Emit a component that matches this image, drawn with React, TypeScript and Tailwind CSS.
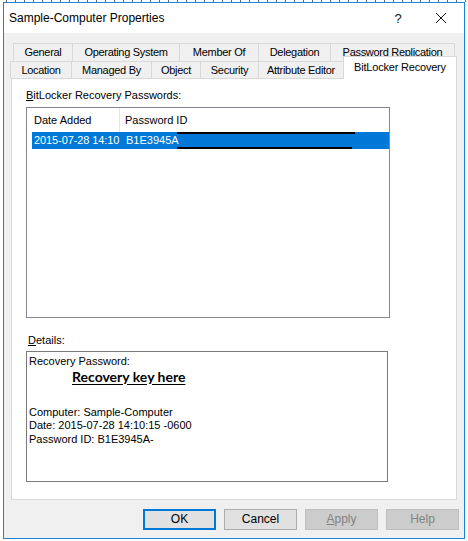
const font = "font-['Liberation_Sans',Arial,sans-serif]";

const topTabs = [
  { label: "General", w: "w-[60px]" },
  { label: "Operating System", w: "w-[108px]" },
  { label: "Member Of", w: "w-[80px]" },
  { label: "Delegation", w: "w-[73px]" },
  { label: "Password Replication", w: "w-[125px]" },
];

const bottomTabs = [
  { label: "Location", w: "w-[62px]" },
  { label: "Managed By", w: "w-[81px]" },
  { label: "Object", w: "w-[50px]" },
  { label: "Security", w: "w-[59px]" },
  { label: "Attribute Editor", w: "w-[86px]" },
];

function Tab({ label, w }: { label: string; w: string }) {
  return (
    <div
      className={`${w} -ml-px flex h-full items-center justify-center border-x border-t border-[#d9d9d9] bg-[#f0f0f0] tracking-[-0.3px] whitespace-nowrap first:ml-0`}
    >
      {label}
    </div>
  );
}

function Button({
  children,
  variant = "normal",
}: {
  children: React.ReactNode;
  variant?: "default" | "normal" | "disabled";
}) {
  const styles = {
    default: "border-2 border-[#0078d7] bg-[#e1e1e1] text-black",
    normal: "border border-[#adadad] bg-[#e1e1e1] text-black",
    disabled: "border border-[#bfbfbf] bg-[#cccccc] text-[#838383]",
  }[variant];
  return (
    <button
      type="button"
      className={`flex h-[21px] w-[73px] items-center justify-center ${styles}`}
    >
      {children}
    </button>
  );
}

export default function App() {
  return (
    <div className={`h-[541px] w-[468px] bg-white text-[11px] leading-[13px] text-black ${font}`}>
      <div className="h-[2px] bg-[repeating-linear-gradient(90deg,transparent_0_6px,#6b6b6b_6px_7px,transparent_7px_9px)]" />

      <div className="ml-[3px] flex h-[537px] w-[462px] flex-col border border-[#1883d7] bg-[#f0f0f0]">
        {/* title bar */}
        <div className="flex h-[30px] shrink-0 items-center bg-white">
          <span className="pl-[5px] text-[12px]">Sample-Computer Properties</span>
          <span className="ml-auto w-[14px] text-center text-[13px] text-[#111]">?</span>
          <svg
            className="mr-[17px] ml-[30px]"
            width="12"
            height="12"
            viewBox="0 0 12 12"
            fill="none"
            stroke="#111"
            strokeWidth="1"
          >
            <path d="M1 1L11 11M11 1L1 11" />
          </svg>
        </div>

        {/* tabs */}
        <div className="mt-[10px] ml-[9px] flex h-[18px]">
          {topTabs.map((t) => (
            <Tab key={t.label} {...t} />
          ))}
        </div>
        <div className="ml-[6px] flex h-[17px]">
          {bottomTabs.map((t) => (
            <Tab key={t.label} {...t} />
          ))}
          <div className="relative z-10 -mt-[5px] -mb-px -ml-px flex h-[23px] w-[114px] items-start justify-center border-x border-t border-[#d9d9d9] bg-white pt-[4px] tracking-[-0.2px]">
            BitLocker Recovery
          </div>
        </div>

        {/* panel */}
        <div className="ml-[7px] flex h-[422px] w-[446px] flex-col border border-[#d9d9d9] bg-white pl-[14px]">
          <div className="mt-[10px]">
            <span className="underline">B</span>itLocker Recovery Passwords:
          </div>

          <div className="mt-[5px] flex h-[211px] w-[364px] flex-col border border-[#828790] bg-white">
            <div className="flex h-[24px] items-center">
              <div className="flex h-full w-[93px] items-center border-r border-[#e5e5e5] pl-[7px]">
                Date Added
              </div>
              <div className="pl-[5px]">Password ID</div>
            </div>
            <div className="ml-[5px] flex h-[17px] items-center bg-[#0078d7] text-white">
              <div className="w-[89px] pl-[2px] tracking-[-0.1px]">2015-07-28 14:10</div>
              <div className="pl-[5px]">B1E3945A</div>
              <div className="ml-[-2px] flex h-full w-[178px] flex-col justify-between">
                <div className="h-[2px] w-[178px] bg-black" />
                <div className="h-[2px] w-[175px] bg-black" />
              </div>
            </div>
          </div>

          <div className="mt-[16px] pl-[2px]">
            <span className="underline">D</span>etails:
          </div>

          <div className="mt-[4px] flex h-[131px] w-[362px] flex-col border border-[#7a7a7a] bg-white pt-[3px] pl-[2px] leading-[13.5px]">
            <div>Recovery Password:</div>
            <div className="ml-[43px] font-['Lato',sans-serif] text-[14px] leading-[16px] font-bold underline underline-offset-2">
              Recovery key here
            </div>
            <div className="mt-[21px]">Computer: Sample-Computer</div>
            <div>Date: 2015-07-28 14:10:15 -0600</div>
            <div>Password ID: B1E3945A-</div>
          </div>
        </div>

        {/* buttons */}
        <div className="mt-[9px] flex justify-end gap-[8px] pr-[5px] text-[12px]">
          <Button variant="default">OK</Button>
          <Button>Cancel</Button>
          <Button variant="disabled">
            <span>
              <span className="underline">A</span>pply
            </span>
          </Button>
          <Button variant="disabled">Help</Button>
        </div>
      </div>
    </div>
  );
}
